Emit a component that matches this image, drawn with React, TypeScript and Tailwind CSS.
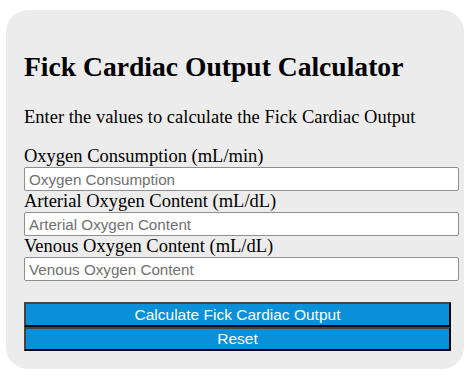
import React from 'react';

const fields = [
    { label: 'Oxygen Consumption (mL/min)', placeholder: 'Oxygen Consumption' },
    { label: 'Arterial Oxygen Content (mL/dL)', placeholder: 'Arterial Oxygen Content' },
    { label: 'Venous Oxygen Content (mL/dL)', placeholder: 'Venous Oxygen Content' },
];

export default function App() {
    return (
        <div className="w-[474px] h-[386px] bg-white pt-[10px] pl-[6px]" style={{ fontFamily: '"Liberation Serif", serif' }}>
            <div className="w-[458px] h-[359px] bg-[#ececec] rounded-[22px] pl-[18px] pt-[40px]">
                <h1 className="text-[27.6px] leading-[33px] font-bold text-black">Fick Cardiac Output Calculator</h1>
                <p className="mt-[23px] text-[18.5px] leading-[22px] text-black">Enter the values to calculate the Fick Cardiac Output</p>
                <div className="mt-[18px] flex flex-col">
                    {fields.map((f) => (
                        <div key={f.label} className="flex flex-col">
                            <label className="text-[18.5px] leading-[21px] text-black">{f.label}</label>
                            <input
                                placeholder={f.placeholder}
                                className="w-[435px] h-[24px] bg-white border border-[#8f8f8f] rounded-[2px] px-[4px] text-[15.2px] text-black placeholder:text-[#707070] outline-none"
                                style={{ fontFamily: '"Liberation Sans", Arial, sans-serif' }}
                            />
                        </div>
                    ))}
                </div>
                <div className="mt-[21px] flex flex-col" style={{ fontFamily: '"Liberation Sans", Arial, sans-serif' }}>
                    <button className="w-[427px] h-[25px] bg-[#0a8fd9] text-white text-[15.5px] leading-[20px] border-2 border-t-[#444] border-l-[#444] border-b-black border-r-black">
                        Calculate Fick Cardiac Output
                    </button>
                    <button className="w-[427px] h-[24px] bg-[#0a8fd9] text-white text-[15.5px] leading-[20px] border-2 border-t-[#444] border-l-[#444] border-b-black border-r-black">
                        Reset
                    </button>
                </div>
            </div>
        </div>
    );
}
